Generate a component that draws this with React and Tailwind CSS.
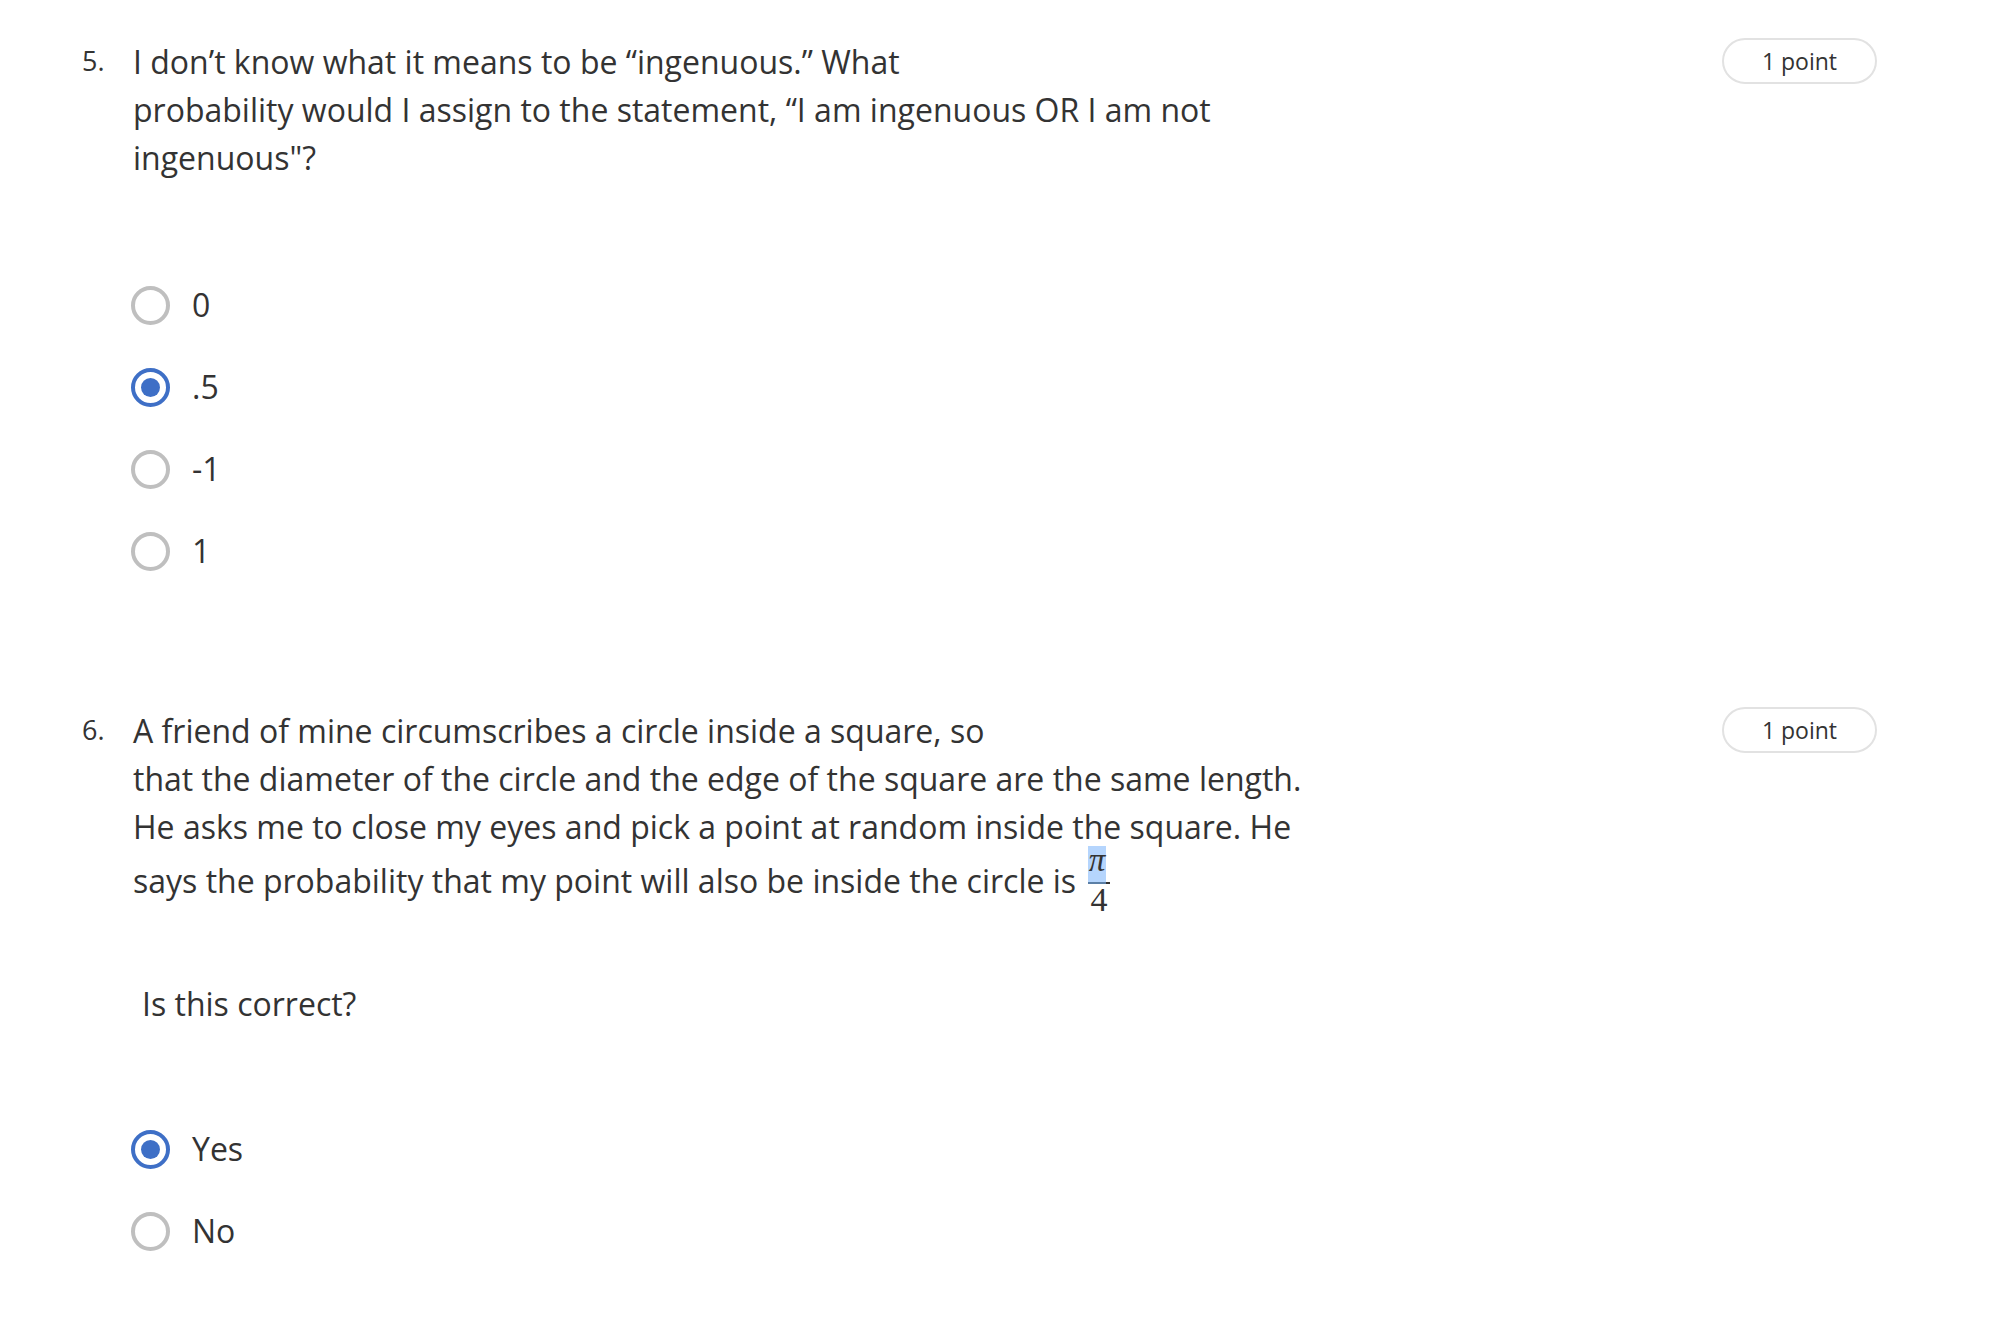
import React from 'react';

const font = { fontFamily: '"Open Sans", "Noto Sans", sans-serif' };

const Radio = ({ checked }) =>
  checked ? (
    <span className="flex h-[39px] w-[39px] shrink-0 items-center justify-center rounded-full border-[4px] border-[#3e6fc6] bg-white">
      <span className="h-[19px] w-[19px] rounded-full bg-[#3e6fc6]" />
    </span>
  ) : (
    <span className="h-[39px] w-[39px] shrink-0 rounded-full border-[4px] border-[#bfbfbf] bg-white" />
  );

const Options = ({ items, selected }) => (
  <div className="flex flex-col">
    {items.map((label) => (
      <label key={label} className="flex h-[82px] items-center gap-[22px]">
        <Radio checked={label === selected} />
        <span className="text-[32px] leading-[48px] text-[#333333]">{label}</span>
      </label>
    ))}
  </div>
);

const Pill = () => (
  <div className="flex h-[46px] w-[155px] shrink-0 items-center justify-center rounded-full border-2 border-[#e2e2e2] text-[23px] text-[#333333]">
    1 point
  </div>
);

// pi over 4, the numerator still carries a text selection highlight
const Fraction = () => (
  <span
    className="relative top-[-3px] ml-[12px] inline-flex flex-col items-center"
    style={{ fontFamily: '"Liberation Serif", "DejaVu Serif", serif' }}
  >
    <span className="flex w-[22px] flex-col items-start">
      <span className="flex h-[36px] w-[18px] items-end justify-center bg-[#b5d5fd] pb-[5px] text-[33px] italic leading-none text-[#333333]">
        π
      </span>
      <span className="h-[2px] w-[22px]" style={{ background: 'linear-gradient(to right, #5b7fa6 82%, #333333 82%)' }} />
    </span>
    <span className="mt-[6px] text-[34px] leading-[20px] text-[#333333]">4</span>
  </span>
);

const Question = ({ number, children }) => (
  <div className="flex items-start">
    <div className="w-[51px] shrink-0 pt-[1px] text-[27px] leading-[44px] text-[#333333]">{number}</div>
    <div className="flex-1">{children}</div>
    <Pill />
  </div>
);

export default function App() {
  return (
    <div className="min-h-screen w-full bg-white text-[#333333]" style={font}>
      <div className="pl-[82px] pr-[113px] pt-[38px]">
        <Question number="5.">
          <p className="text-[32px] leading-[48px]">
            I don’t know what it means to be “ingenuous.” What
            <br />
            probability would I assign to the statement, “I am ingenuous OR I am not
            <br />
            ingenuous"?
          </p>
          <div className="ml-[-2px] mt-[82px]">
            <Options items={['0', '.5', '-1', '1']} selected=".5" />
          </div>
        </Question>

        <div className="mt-[115px]">
          <Question number="6.">
            <p className="text-[32px] leading-[48px]">
              A friend of mine circumscribes a circle inside a square, so
              <br />
              that the diameter of the circle and the edge of the square are the same length.
              <br />
              He asks me to close my eyes and pick a point at random inside the square. He
            </p>
            <p className="flex h-[60px] items-center text-[32px] leading-[48px]">
              says the probability that my point will also be inside the circle is
              <Fraction />
            </p>
            <p className="ml-[9px] mt-[69px] text-[32px] leading-[48px]">Is this correct?</p>
            <div className="ml-[-2px] mt-[80px]">
              <Options items={['Yes', 'No']} selected="Yes" />
            </div>
          </Question>
        </div>
      </div>
    </div>
  );
}
